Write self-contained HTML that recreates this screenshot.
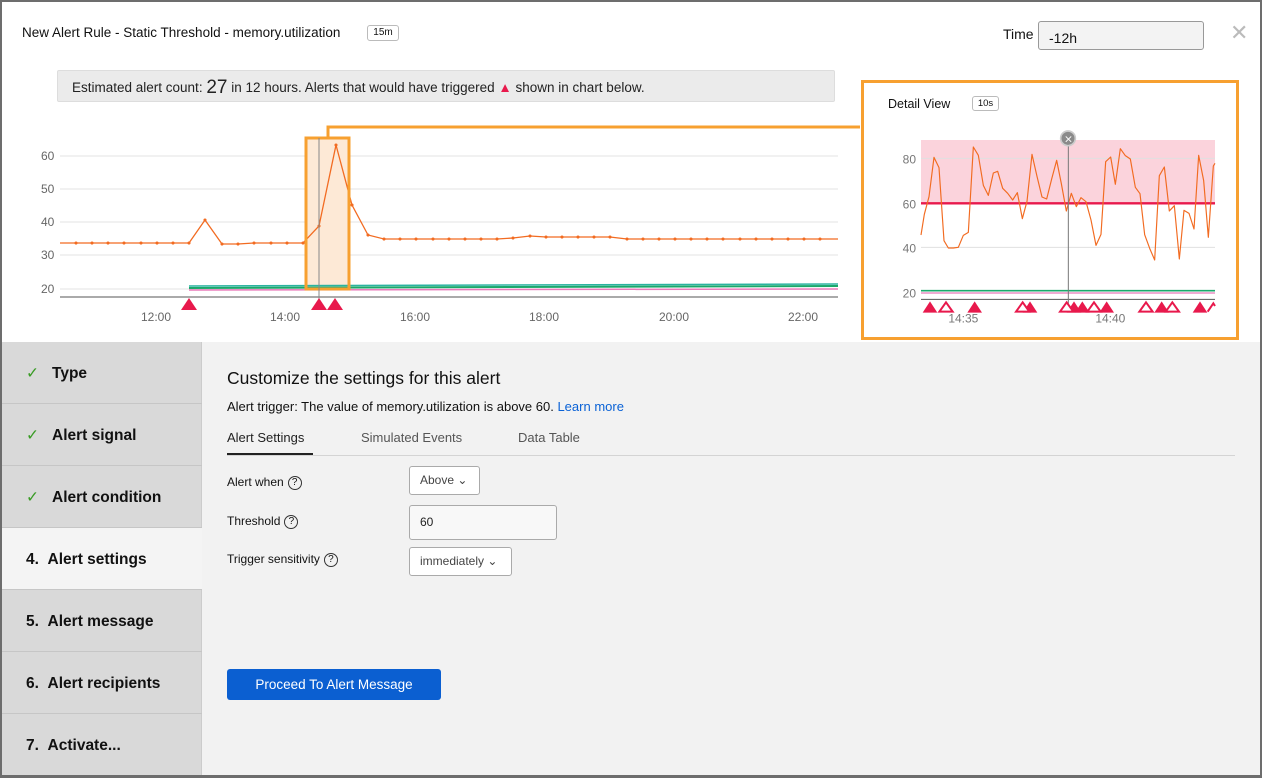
<!DOCTYPE html>
<html><head><meta charset="utf-8">
<style>
*{box-sizing:border-box;margin:0;padding:0}
body{width:1262px;height:775px;overflow:hidden;background:#6d6d6d;font-family:"Liberation Sans",sans-serif;color:#111;position:relative}
.modal{position:absolute;left:2px;top:2px;width:1258px;height:773px;background:#fff}
.abs{position:absolute}
.side{position:absolute;left:2px;top:342px;width:200px;height:433px;background:#d9d9d9;border-right:1px solid #ccc}
.item{position:absolute;left:0;width:200px;height:62px;border-bottom:1px solid #c6c6c6;font-weight:bold;font-size:15.5px;padding-left:24px;line-height:64px}
.item.act{background:#f4f4f4}
.ck{color:#3a9c26;font-weight:normal;display:inline-block;width:26px}
.main{position:absolute;left:202px;top:342px;width:1058px;height:433px;background:#f2f2f2}
.q{display:inline-block;width:14px;height:14px;border:1px solid #333;border-radius:50%;font-size:10px;line-height:12px;text-align:center;margin-left:4px;vertical-align:middle}
.box{position:absolute;background:#fff;border:1px solid #aaa;border-radius:3px;font-size:12px;color:#444;padding-left:10px}
</style></head><body>
<div class="modal"></div>
<div class="abs" style="left:22px;top:25px;font-size:13.5px">New Alert Rule - Static Threshold - memory.utilization</div>
<div class="abs" style="left:367px;top:25px;width:32px;height:16px;border:1px solid #bbb;border-radius:3px;font-size:10px;text-align:center;line-height:14px">15m</div>
<div class="abs" style="left:1003px;top:26px;font-size:14px">Time</div>
<div class="abs" style="left:1038px;top:21px;width:166px;height:29px;background:#f3f3f3;border:1px solid #999;border-radius:3px;font-size:14px;padding:8px 0 0 10px">-12h</div>
<div class="abs" style="left:1230px;top:20px;font-size:22px;color:#bbb">✕</div>
<div class="abs" style="left:57px;top:70px;width:778px;height:32px;background:#ebebeb;border:1px solid #ddd;border-radius:2px;font-size:13.5px;color:#222;padding:6px 0 0 14px">Estimated alert count: <span style="font-size:19px;vertical-align:-1px">27</span> in 12 hours. Alerts that would have triggered <span style="color:#e8194c">▲</span> shown in chart below.</div>

<svg class="abs" style="left:0;top:0" width="860" height="340">
<defs><marker id="d" markerWidth="3" markerHeight="3" refX="1.5" refY="1.5"><circle cx="1.5" cy="1.5" r="1.2" fill="#f26b21"/></marker></defs>
<g stroke="#e3e3e3"><line x1="60" y1="156" x2="838" y2="156"/><line x1="60" y1="189" x2="838" y2="189"/><line x1="60" y1="222" x2="838" y2="222"/><line x1="60" y1="255" x2="838" y2="255"/><line x1="60" y1="289" x2="838" y2="289"/></g>
<line x1="60" y1="297" x2="838" y2="297" stroke="#555"/>
<g font-size="12" fill="#666" font-family="Liberation Sans"><text x="41" y="160">60</text><text x="41" y="193">50</text><text x="41" y="226">40</text><text x="41" y="259">30</text><text x="41" y="293">20</text>
<text x="141" y="321">12:00</text><text x="270" y="321">14:00</text><text x="400" y="321">16:00</text><text x="529" y="321">18:00</text><text x="659" y="321">20:00</text><text x="788" y="321">22:00</text></g>
<rect x="306" y="138" width="43" height="151" fill="#fde9d6"/>
<polyline fill="none" stroke="#1aa86b" stroke-width="2" points="189,288 838,286"/>
<polyline fill="none" stroke="#2ab3a0" stroke-width="1.5" points="189,286 838,284"/>
<polyline fill="none" stroke="#e879b9" stroke-width="1.5" points="189,290 838,289"/>
<polyline fill="none" stroke="#f26b21" stroke-width="1.3" marker-mid="url(#d)" points="60,243 76,243 92,243 108,243 124,243 141,243 157,243 173,243 189,243 205,220 222,244 238,244 254,243 271,243 287,243 303,243 319,226 336,145 352,205 368,235 384,239 400,239 416,239 433,239 449,239 465,239 481,239 497,239 513,238 530,236 546,237 562,237 578,237 594,237 610,237 627,239 643,239 659,239 675,239 691,239 707,239 723,239 740,239 756,239 772,239 788,239 804,239 820,239 838,239"/>
<rect x="306" y="138" width="43" height="151" fill="none" stroke="#f7a030" stroke-width="3"/>
<line x1="319" y1="138" x2="319" y2="310" stroke="#888"/>
<polyline fill="none" stroke="#f7a030" stroke-width="3" points="328,138 328,127 861,127"/>
<g fill="#e8194c"><path d="M181,310 L189,298 L197,310Z"/><path d="M311,310 L319,298 L327,310Z"/><path d="M327,310 L335,298 L343,310Z"/></g>
</svg>

<div class="abs" style="left:861px;top:80px;width:378px;height:260px;border:3px solid #f7a030;background:#fff"></div>
<div class="abs" style="left:888px;top:97px;font-size:12.5px">Detail View</div>
<div class="abs" style="left:972px;top:96px;width:27px;height:15px;border:1px solid #bbb;border-radius:3px;font-size:9.5px;text-align:center;line-height:13px">10s</div>
<svg class="abs" style="left:860px;top:0" width="402" height="345" viewBox="0 0 1206 1035">
<rect x="183" y="420" width="882" height="190" fill="#fbd3dc"/>
<g stroke="#e0e0e0" stroke-width="3"><line x1="183" y1="475" x2="1065" y2="475"/><line x1="183" y1="742" x2="1065" y2="742"/></g>
<line x1="183" y1="610" x2="1065" y2="610" stroke="#e8194c" stroke-width="7"/>
<line x1="183" y1="872" x2="1065" y2="872" stroke="#1aa86b" stroke-width="5"/>
<line x1="183" y1="879" x2="1065" y2="879" stroke="#e879b9" stroke-width="4"/>
<line x1="183" y1="898" x2="1065" y2="898" stroke="#555" stroke-width="3"/>
<g font-size="36" fill="#777" font-family="Liberation Sans"><text x="128" y="490">80</text><text x="128" y="625">60</text><text x="128" y="757">40</text><text x="128" y="893">20</text><text x="265" y="968">14:35</text><text x="706" y="968">14:40</text></g>
<polyline fill="none" stroke="#f26b21" stroke-width="3.5" stroke-linejoin="round" points="183,705 193,643 207,590 222,472 237,503 252,722 265,744 280,744 295,742 310,706 325,697 340,441 355,466 370,556 385,586 400,519 413,514 428,565 443,580 458,600 472,578 487,656 501,604 516,463 531,529 546,591 560,597 575,537 590,481 604,551 619,633 634,580 649,620 663,593 678,605 693,660 708,736 723,703 737,485 752,471 766,553 781,446 796,467 811,477 826,562 840,581 854,704 869,745 884,780 898,527 913,501 928,633 943,617 958,777 972,631 987,640 1002,687 1016,466 1031,542 1045,712 1060,498 1065,490"/>
<line x1="625" y1="415" x2="625" y2="915" stroke="#777" stroke-width="3"/>
<circle cx="624" cy="415" r="22" fill="#8a8a8a" stroke="#ccc" stroke-width="5"/>
<text x="612" y="428" font-size="32" fill="#fff" font-family="DejaVu Sans">×</text>
<g fill="#e8194c"><path d="M188,938 L210,904 L232,938Z"/><path d="M322,938 L344,904 L366,938Z"/><path d="M488,938 L510,904 L532,938Z"/><path d="M620,938 L642,904 L664,938Z"/><path d="M645,938 L667,904 L689,938Z"/><path d="M718,938 L740,904 L762,938Z"/><path d="M883,938 L905,904 L927,938Z"/><path d="M998,938 L1020,904 L1042,938Z"/></g>
<g fill="#fff" stroke="#e8194c" stroke-width="6"><path d="M238,935 L258,907 L278,935Z"/><path d="M468,935 L488,907 L508,935Z"/><path d="M600,935 L620,907 L640,935Z"/><path d="M682,935 L702,907 L722,935Z"/><path d="M838,935 L858,907 L878,935Z"/><path d="M917,935 L937,907 L957,935Z"/><path d="M1043,935 L1060,910 L1065,918"/></g>
</svg>

<div class="side">
<div class="item" style="top:0"><span class="ck">✓</span>Type</div>
<div class="item" style="top:62px"><span class="ck">✓</span>Alert signal</div>
<div class="item" style="top:124px"><span class="ck">✓</span>Alert condition</div>
<div class="item act" style="top:186px">4.&nbsp;&nbsp;Alert settings</div>
<div class="item" style="top:248px">5.&nbsp;&nbsp;Alert message</div>
<div class="item" style="top:310px">6.&nbsp;&nbsp;Alert recipients</div>
<div class="item" style="top:372px;border:none">7.&nbsp;&nbsp;Activate...</div>
</div>
<div class="main">
<div class="abs" style="left:25px;top:26px;font-size:17.5px">Customize the settings for this alert</div>
<div class="abs" style="left:25px;top:57px;font-size:13px">Alert trigger: The value of memory.utilization is above 60. <span style="color:#0a62d6">Learn more</span></div>
<div class="abs" style="left:25px;top:88px;font-size:13px;color:#222">Alert Settings</div>
<div class="abs" style="left:25px;top:111px;width:86px;height:2px;background:#222"></div>
<div class="abs" style="left:159px;top:88px;font-size:13px;color:#555">Simulated Events</div>
<div class="abs" style="left:316px;top:88px;font-size:13px;color:#555">Data Table</div>
<div class="abs" style="left:25px;top:113px;width:1008px;height:1px;background:#d4d4d4"></div>
<div class="abs" style="left:25px;top:133px;font-size:12px">Alert when<span class="q">?</span></div>
<div class="abs" style="left:25px;top:172px;font-size:12px">Threshold<span class="q">?</span></div>
<div class="abs" style="left:25px;top:210px;font-size:12px">Trigger sensitivity<span class="q">?</span></div>
<div class="box" style="left:207px;top:124px;width:71px;height:29px;line-height:27px">Above ⌄</div>
<div class="box" style="left:207px;top:163px;width:148px;height:35px;line-height:33px;background:#f8f8f8;color:#222">60</div>
<div class="box" style="left:207px;top:205px;width:103px;height:29px;line-height:27px">immediately ⌄</div>
<div class="abs" style="left:25px;top:327px;width:214px;height:31px;background:#0b5fd1;border-radius:3px;color:#fff;font-size:13.5px;text-align:center;line-height:31px">Proceed To Alert Message</div>
</div>
</body></html>
